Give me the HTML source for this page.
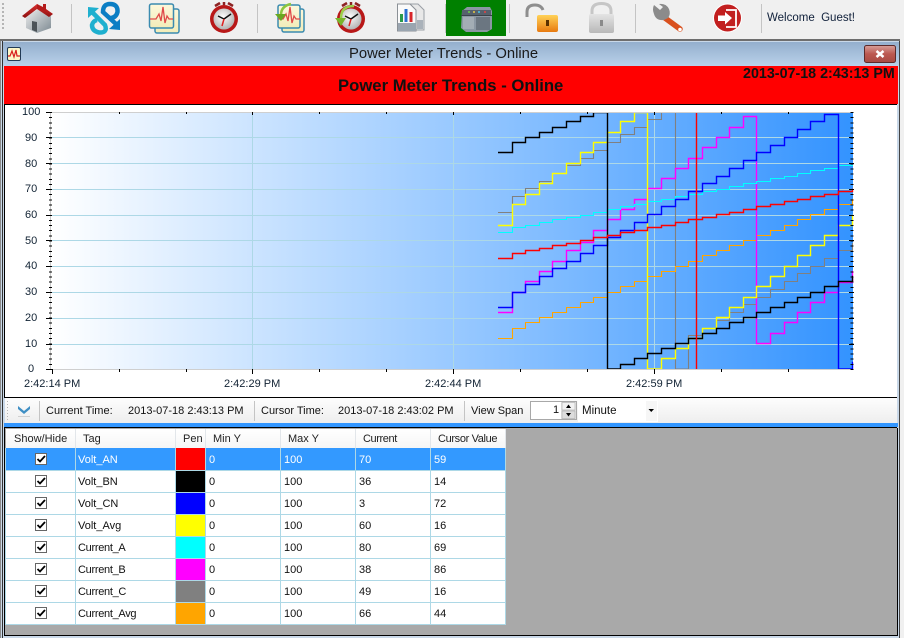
<!DOCTYPE html>
<html><head><meta charset="utf-8">
<style>
html,body{margin:0;padding:0;width:904px;height:638px;overflow:hidden;background:#f0f0f0;font-family:"Liberation Sans",sans-serif;color:#000}
div{position:absolute}
.t{white-space:pre;font-size:11px;line-height:14px;color:#111}
.h{position:absolute;top:429px;height:19px;background:linear-gradient(#fff,#f6f6f6);border-right:1px solid #e2e6ea;font-size:11px;line-height:20px;color:#222;white-space:pre;box-sizing:border-box}
.tl{font-size:11px;line-height:14px;color:#111;white-space:pre}
</style></head><body>

<!-- Top toolbar -->
<div style="left:446px;top:0;width:60px;height:36px;background:#008000"></div>
<svg style="position:absolute;left:0;top:0" width="904" height="40" viewBox="0 0 904 40">
<defs>
<linearGradient id="wall" x1="0" y1="0" x2="1" y2="1"><stop offset="0" stop-color="#eeeeee"/><stop offset="1" stop-color="#7d8a92"/></linearGradient>
<linearGradient id="roof" x1="0" y1="0" x2="0" y2="1"><stop offset="0" stop-color="#d83030"/><stop offset="1" stop-color="#8c0f0f"/></linearGradient>
<radialGradient id="face" cx=".45" cy=".4" r=".7"><stop offset="0" stop-color="#fff"/><stop offset="1" stop-color="#a8a8a8"/></radialGradient>
<linearGradient id="lockO" x1="0" y1="0" x2="0" y2="1"><stop offset="0" stop-color="#ffd257"/><stop offset="1" stop-color="#e87a10"/></linearGradient>
<linearGradient id="lockG" x1="0" y1="0" x2="0" y2="1"><stop offset="0" stop-color="#e4e4e4"/><stop offset="1" stop-color="#b8b8b8"/></linearGradient>
<linearGradient id="doc" x1="0" y1="0" x2="0" y2="1"><stop offset="0" stop-color="#fdf8dc"/><stop offset="1" stop-color="#f2ecb8"/></linearGradient>
</defs>
<!-- separators -->
<g fill="#c4c4c4"><rect x="71" y="4" width="1" height="29"/><rect x="257" y="4" width="1" height="29"/><rect x="445" y="4" width="1" height="29"/><rect x="509" y="4" width="1" height="29"/><rect x="635" y="4" width="1" height="29"/><rect x="761" y="4" width="1" height="29"/></g>
<path d="M3 3V30" stroke="#b5b5b5" stroke-width="2" stroke-dasharray="2 2"/>
<!-- house -->
<path d="M26 16L39 9L51 16V28L37 33L26 28Z" fill="url(#wall)"/>
<path d="M32 21L37 22V32L32 30Z" fill="#4c5358"/>
<path d="M22 16L37 4L53 14L49 17L37 9L25 18Z" fill="url(#roof)"/>
<path d="M37 4L43 7V4L46 4V9L53 14L37 9Z" fill="#b51c1c"/>
<!-- S logo -->
<path d="M92 12L105 25Q108 33 99 32.500 92 31 92 25 93 21 97 20" fill="none" stroke="#1fb0cf" stroke-width="4.500"/>
<path d="M88 7L88 18L99 8Z" fill="#1fb0cf"/>
<path d="M116 24L103 12Q103 4 110 4 118 4 117.500 12 116 18 110 18" fill="none" stroke="#0b7ec4" stroke-width="4.500"/>
<path d="M120 30L120 19L109 29Z" fill="#0b7ec4"/>
<!-- trend docs -->
<rect x="155" y="9" width="24" height="24" rx="2" fill="url(#doc)" stroke="#3b8bb0" stroke-width="1.500"/>
<rect x="149.500" y="4" width="24" height="24" rx="2" fill="url(#doc)" stroke="#3b8bb0" stroke-width="1.500"/>
<path d="M150 19H156L159 14L161 21L163 7L165 23L167 16L169 19H173" fill="none" stroke="#df4a4a" stroke-width="1.300"/>
<!-- clock -->
<circle cx="224" cy="19" r="14" fill="#b81818"/><circle cx="224" cy="19" r="10.500" fill="url(#face)"/>
<path d="M215 6l5-3M233 6l-5-3M224 2v3" stroke="#8d2323" stroke-width="2.500"/>
<path d="M224 19l-6-3M224 19l7-5" stroke="#111" stroke-width="1.500" fill="none"/><path d="M224 19l-2 7" stroke="#d22" stroke-width="1.500"/>
<!-- green docs -->
<rect x="282" y="9" width="22" height="23" rx="2" fill="url(#doc)" stroke="#3b8bb0" stroke-width="1.500"/>
<rect x="278" y="5" width="22" height="23" rx="2" fill="url(#doc)" stroke="#3b8bb0" stroke-width="1.500"/>
<path d="M278 19H283L286 14L288 21L290 7L292 23L294 16L296 19H300" fill="none" stroke="#df4a4a" stroke-width="1.300"/>
<path d="M291 4Q281 6 281 15" fill="none" stroke="#8cc63f" stroke-width="2.500"/><path d="M275 14H286L281 21Z" fill="#6aa820"/>
<!-- green clock -->
<circle cx="351" cy="19" r="14" fill="#b81818"/><circle cx="351" cy="19" r="10.500" fill="url(#face)"/>
<path d="M342 6l5-3M360 6l-5-3M351 2v3" stroke="#8d2323" stroke-width="2.500"/>
<path d="M351 19l-6-3M351 19l7-5" stroke="#111" stroke-width="1.500" fill="none"/><path d="M351 19l-2 7" stroke="#d22" stroke-width="1.500"/>
<path d="M354 6Q341 6 341 18" fill="none" stroke="#9ccf4a" stroke-width="2.500"/><path d="M335 18H346L341 26Z" fill="#78b52a"/>
<!-- report -->
<path d="M407 4H418L424 10V30H407Z" fill="#e8e8e8" stroke="#9a9fa6"/>
<path d="M397.500 4H410L416 10V31H397.500Z" fill="#fafafa" stroke="#8b9096"/>
<rect x="398" y="23" width="18" height="8" fill="#9aa5b0"/><rect x="417" y="20" width="6" height="9" fill="#aab2ba"/>
<rect x="400" y="14" width="3" height="8" fill="#2a9a4a"/><rect x="404.500" y="9" width="3" height="13" fill="#2a6fd0"/><rect x="409.500" y="12" width="3" height="10" fill="#d8262a"/>
<!-- PLC -->
<path d="M462 11L467 7H490L492 11V29L487 32H466L461 28Z" fill="#8b97a3"/>
<rect x="462" y="10" width="29" height="5" fill="#56616d"/><rect x="461" y="15" width="31" height="1" fill="#3a424a"/>
<rect x="463" y="17" width="11" height="12" fill="#a3adb5"/><rect x="476" y="17" width="14" height="13" fill="#6b7681"/>
<circle cx="469" cy="12" r="1" fill="#6cd04a"/><circle cx="474" cy="12" r="1" fill="#e8c840"/><circle cx="479" cy="12" r="1" fill="#48c8e8"/><circle cx="485" cy="12" r="1" fill="#e84040"/>
<!-- unlock -->
<path d="M527 17V12Q527 5 535 5Q541 5 543 10" fill="none" stroke="#8e8e8e" stroke-width="3"/>
<rect x="537" y="15" width="21" height="17" rx="2" fill="url(#lockO)"/><rect x="546" y="20" width="3" height="6" fill="#5a3000"/>
<!-- lock -->
<path d="M592 16V11Q592 3.500 601.500 3.500Q611 3.500 611 11V16" fill="none" stroke="#c6c6c6" stroke-width="3"/>
<rect x="589" y="14" width="25" height="19" rx="2" fill="url(#lockG)"/><rect x="600" y="20" width="3" height="6" fill="#8a8a8a"/>
<!-- wrench -->
<path d="M665 18L680 29" stroke="#d9501e" stroke-width="5.500" stroke-linecap="round"/><circle cx="680" cy="29.500" r="1.800" fill="#fff"/>
<path d="M654 5L660 10L663 7L659 4Q666 3 669 9Q671 14 668 18L664 20Q656 21 654 14Q652 9 654 5Z" fill="#8b8b8b"/>
<!-- exit -->
<circle cx="727.500" cy="18" r="14.500" fill="#fff"/><circle cx="727.500" cy="18" r="13.500" fill="#c21f1f"/>
<path d="M726 10H736V27H726" fill="none" stroke="#fff" stroke-width="1.800"/>
<path d="M718 15.500H725V12L732 18L725 24.500V21H718Z" fill="#fff"/>
</svg>
<div class="t" style="left:767px;top:11px;font-size:11.500px;color:#10203a">Welcome  Guest!</div>

<!-- window frame -->
<div style="left:0;top:39px;width:900px;height:2px;background:#6e6e6e"></div>
<div style="left:0;top:41px;width:900px;height:597px;background:#c9d8e8"></div>
<div style="left:0;top:41px;width:1px;height:597px;background:#8a8a8a"></div>
<div style="left:2px;top:41px;width:1px;height:597px;background:#333"></div>
<div style="left:899px;top:41px;width:1px;height:597px;background:#444"></div>
<div style="left:3px;top:42px;width:896px;height:24px;background:linear-gradient(#94afcd,#b9d1ea)"></div>
<div style="left:349px;top:46px;font-size:14.800px;line-height:17px;color:#1a1a1a;white-space:pre">Power Meter Trends - Online</div>
<svg style="position:absolute;left:7px;top:47px" width="14" height="14" viewBox="0 0 14 14"><rect x=".5" y=".5" width="13" height="13" rx="1.500" fill="#fdf7c8" stroke="#223a55"/><path d="M1 9H3L5 4L7 10L9 3L10 9H13" fill="none" stroke="#d81e1e" stroke-width="1.200"/></svg>
<svg style="position:absolute;left:864px;top:45px" width="32" height="18" viewBox="0 0 32 18"><defs><linearGradient id="cl" x1="0" y1="0" x2="0" y2="1"><stop offset="0" stop-color="#d8a09a"/><stop offset=".5" stop-color="#bb5850"/><stop offset="1" stop-color="#a84a42"/></linearGradient></defs><rect x=".5" y=".5" width="31" height="17" rx="2" fill="url(#cl)" stroke="#5c2a2a"/><path d="M12.500 6L19.500 12M19.500 6L12.500 12" stroke="#fff" stroke-width="2.500"/></svg>

<!-- red header -->
<div style="left:4px;top:66px;width:894px;height:38px;background:#f00"></div>
<div style="left:338px;top:76px;font-size:16.700px;font-weight:bold;line-height:19px;color:#111;white-space:pre">Power Meter Trends - Online</div>
<div style="left:743px;top:66px;font-size:14.300px;font-weight:bold;line-height:16px;color:#111;white-space:pre">2013-07-18 2:43:13 PM</div>

<!-- chart -->
<div style="left:4px;top:104px;background:#fff;border-top:1px solid #000;border-left:1px solid #000;width:892px;height:292px"></div>
<div style="left:52px;top:112px;width:801px;height:257px;background:linear-gradient(90deg,#fff,#3393ff)"></div>
<svg style="position:absolute;left:0;top:0" width="904" height="400" viewBox="0 0 904 400" shape-rendering="crispEdges">
<g stroke="#add8e6" fill="none">
<path d="M52 137.500H853M52 163.500H853M52 189.500H853M52 215.500H853M52 240.500H853M52 266.500H853M52 292.500H853M52 318.500H853M52 344.500H853"/>
<path d="M252.500 112V369M453.500 112V369M654.500 112V369"/>
</g>
<path d="M50.500 112V369" stroke="#c8c8c8" fill="none"/>
<g fill="none" stroke-width="1.100" shape-rendering="geometricPrecision">
<path stroke="#808080" d="M498 212.500H512.500V196.500H525.500V188.500H539.500V181.500H552.500V173.500H566.500V165.500H580.500V158.500H593.500V150.500H607.500V142.500H620.500V134.500H634.500V127.500H647.500V119.500H661.500V112.500H675.500V369H688.500V335.500H702.500V328.500H716.500V320.500H729.500V312.500H743.500V304.500H756.500V297.500H770.500V289.500H784.500V281.500H797.500V273.500H810.500V266.500H824.500V258.500H838.500V250.500H852.500V243.500H853"/>
<path stroke="#ffa500" d="M498 338.500H512.500V328.500H525.500V322.500H539.500V317.500H552.500V312.500H566.500V307.500H580.500V302.500H593.500V297.500H607.500V292.500H620.500V286.500H634.500V281.500H647.500V276.500H661.500V271.500H675.500V266.500H688.500V261.500H702.500V255.500H716.500V250.500H729.500V245.500H743.500V240.500H756.500V235.500H770.500V230.500H784.500V225.500H797.500V219.500H810.500V214.500H824.500V209.500H838.500V204.500H852.500V199.500H853"/>
<path stroke="#ff00ff" stroke-width="1.400" d="M498 312.500H512.500V292.500H525.500V281.500H539.500V271.500H552.500V261.500H566.500V250.500H580.500V242.500H593.500V230.500H607.500V219.500H620.500V209.500H634.500V199.500H647.500V188.500H661.500V178.500H675.500V168.500H688.500V158.500H702.500V147.500H716.500V137.500H729.500V127.500H743.500V116.500H756.500V343.500H770.500V333.500H784.500V322.500H797.500V312.500H810.500V302.500H824.500V292.500H838.500V282.500H852.500V271.500H853"/>
<path stroke="#00ffff" d="M498 232.500H512.500V227.500H525.500V225.500H539.500V222.500H552.500V219.500H566.500V217.500H580.500V215.500H593.500V212.500H607.500V209.500H620.500V206.500H634.500V204.500H647.500V201.500H661.500V199.500H675.500V196.500H688.500V194.500H702.500V191.500H716.500V189.500H729.500V186.500H743.500V183.500H756.500V181.500H770.500V178.500H784.500V176.500H797.500V173.500H810.500V170.500H824.500V168.500H838.500V165.500H853"/>
<path stroke="#ffff00" stroke-width="1.400" d="M498 225.500H512.500V204.500H525.500V194.500H539.500V183.500H552.500V173.500H566.500V163.500H580.500V152.500H593.500V142.500H607.500V132.500H620.500V121.500H634.500V112.500H647.500V369H661.500V358.500H675.500V348.500H688.500V338.500H702.500V328.500H716.500V317.500H729.500V307.500H743.500V297.500H756.500V286.500H770.500V276.500H784.500V266.500H797.500V255.500H810.500V245.500H824.500V235.500H838.500V225.500H852.500V215.500H853"/>
<path stroke="#0000ff" stroke-width="1.400" d="M498 307.500H512.500V292.500H525.500V284.500H539.500V276.500H552.500V268.500H566.500V261.500H580.500V253.500H593.500V245.500H607.500V237.500H620.500V230.500H634.500V222.500H647.500V214.500H661.500V206.500H675.500V199.500H688.500V191.500H702.500V183.500H716.500V176.500H729.500V168.500H743.500V160.500H756.500V152.500H770.500V145.500H784.500V137.500H797.500V129.500H810.500V121.500H824.500V114.500H838.500V369H852.500V362.500H853"/>
<path stroke="#000000" stroke-width="1.400" d="M498 152.500H512.500V142.500H525.500V137.500H539.500V132.500H552.500V127.500H566.500V121.500H580.500V116.500H593.500V112.500H607.500V369H620.500V364.500H634.500V358.500H647.500V353.500H661.500V348.500H675.500V343.500H688.500V338.500H702.500V333.500H716.500V328.500H729.500V322.500H743.500V317.500H756.500V312.500H770.500V307.500H784.500V302.500H797.500V297.500H810.500V292.500H824.500V286.500H838.500V281.500H852.500V276.500H853"/>
<path stroke="#ff0000" stroke-width="1.400" d="M498 258.500H512.500V253.500H525.500V250.500H539.500V248.500H552.500V245.500H566.500V243.500H580.500V240.500H593.500V237.500H607.500V235.500H620.500V232.500H634.500V230.500H647.500V227.500H661.500V225.500H675.500V222.500H688.500V219.500H702.500V217.500H716.500V214.500H729.500V212.500H743.500V209.500H756.500V206.500H770.500V204.500H784.500V201.500H797.500V199.500H810.500V196.500H824.500V194.500H838.500V191.500H852.500V189.500H853"/>
<path stroke="#ff0000" stroke-width="1.400" d="M696.500 112V369"/>
</g>
<rect x="52" y="105" width="802" height="7" fill="#fff"/>
<rect x="52" y="370" width="802" height="4" fill="#fff"/>
<path d="M52 112.500H853M52 369.500H853" stroke="#cfcfcf" fill="none"/>
<g fill="none" stroke="#000">
<path d="M50.500 112V370" stroke-width="3" stroke-dasharray="1 4.140"/>
<path d="M46 112.500H52M46 137.500H52M46 163.500H52M46 189.500H52M46 215.500H52M46 240.500H52M46 266.500H52M46 292.500H52M46 318.500H52M46 344.500H52M46 369.500H52"/>
<path d="M852 112V370" stroke-width="3" stroke-dasharray="1 4.140"/>
<path d="M849 137.500H854M849 163.500H854M849 189.500H854M849 215.500H854M849 240.500H854M849 266.500H854M849 292.500H854M849 318.500H854M849 344.500H854"/>
<path d="M52.500 369V374M252.500 369V374M453.500 369V374M654.500 369V374M119.500 369V372M186.500 369V372M319.500 369V372M386.500 369V372M520.500 369V372M587.500 369V372M721.500 369V372M788.500 369V372"/>
<path d="M119.500 112V114M186.500 112V114M252.500 112V115M319.500 112V114M386.500 112V114M453.500 112V115M520.500 112V114M587.500 112V114M654.500 112V115M721.500 112V114M788.500 112V114"/>
</g>
</svg>
<div class="t" style="left:22px;top:105px;color:#123">100</div>
<div class="t" style="left:25px;top:131px;color:#123">90</div>
<div class="t" style="left:25px;top:157px;color:#123">80</div>
<div class="t" style="left:25px;top:182px;color:#123">70</div>
<div class="t" style="left:25px;top:208px;color:#123">60</div>
<div class="t" style="left:25px;top:234px;color:#123">50</div>
<div class="t" style="left:25px;top:259px;color:#123">40</div>
<div class="t" style="left:25px;top:285px;color:#123">30</div>
<div class="t" style="left:25px;top:311px;color:#123">20</div>
<div class="t" style="left:25px;top:337px;color:#123">10</div>
<div class="t" style="left:28px;top:362px;color:#123">0</div>
<div class="t" style="left:24px;top:377px;color:#123">2:42:14 PM</div>
<div class="t" style="left:224px;top:377px;color:#123">2:42:29 PM</div>
<div class="t" style="left:425px;top:377px;color:#123">2:42:44 PM</div>
<div class="t" style="left:626px;top:377px;color:#123">2:42:59 PM</div>

<!-- control bar -->
<div style="left:4px;top:397px;width:893px;height:1px;background:#000"></div>
<div style="left:5px;top:398px;width:892px;height:25px;background:linear-gradient(#fdfdfd,#eeeeee)"></div>
<div style="left:4px;top:423px;width:894px;height:4px;background:#3296ff"></div>
<div style="left:4px;top:427px;width:893px;height:1px;background:#000"></div>
<svg style="position:absolute;left:0;top:398px" width="680" height="26" viewBox="0 0 680 26">
<path d="M7.500 3V22" stroke="#b5b5b5" stroke-dasharray="1 2"/>
<path d="M18 8L24 13L30 8V11L24 16L18 11Z" fill="#3f8fc4"/><rect x="18" y="18" width="12" height="1" fill="#d0d0d0"/>
<rect x="39" y="3" width="1" height="20" fill="#c4c4c4"/><rect x="254" y="3" width="1" height="20" fill="#c4c4c4"/><rect x="464" y="3" width="1" height="20" fill="#c4c4c4"/>
<rect x="578" y="2" width="80" height="22" fill="#fff"/><rect x="646" y="3" width="11" height="20" fill="#f6f6f6"/>
<path d="M648.500 11H654L651.250 14Z" fill="#000"/>
<rect x="530.500" y="3.500" width="46" height="18" fill="#fff" stroke="#a8a8a8"/>
<rect x="561" y="4" width="15" height="17" fill="#e8e8e8"/><rect x="562" y="4.500" width="13" height="7.500" fill="#f2f2f2" stroke="#aaa" stroke-width=".6"/><rect x="562" y="13" width="13" height="7.500" fill="#ddd" stroke="#aaa" stroke-width=".6"/>
<path d="M566 10H571L568.500 6.500Z" fill="#000"/><path d="M566 15H571L568.500 18.500Z" fill="#000"/>
</svg>
<div class="tl" style="left:46px;top:404px">Current Time:</div>
<div class="tl" style="left:128px;top:404px">2013-07-18 2:43:13 PM</div>
<div class="tl" style="left:261px;top:404px">Cursor Time:</div>
<div class="tl" style="left:338px;top:404px">2013-07-18 2:43:02 PM</div>
<div class="tl" style="left:471px;top:404px">View Span</div>
<div class="tl" style="left:553px;top:403px">1</div>
<div class="tl" style="left:582px;top:404px;font-size:11.500px">Minute</div>

<!-- gray panel -->
<div style="left:5px;top:428px;width:892px;height:207px;background:#a9a9a9"></div>
<div style="left:4px;top:428px;width:1px;height:208px;background:#000"></div>
<div style="left:897px;top:428px;width:1px;height:208px;background:#000"></div>
<div style="left:4px;top:635px;width:894px;height:1px;background:#000"></div>

<!-- table -->
<div style="left:6px;top:429px;width:499px;height:196px;background:#fff"></div>
<div class="h" style="left:6px;width:70px;padding-left:8px">Show/Hide</div>
<div class="h" style="left:76px;width:100px;padding-left:7px">Tag</div>
<div class="h" style="left:176px;width:30px;padding-left:7px">Pen</div>
<div class="h" style="left:206px;width:75px;padding-left:7px">Min Y</div>
<div class="h" style="left:281px;width:75px;padding-left:7px">Max Y</div>
<div class="h" style="left:356px;width:75px;padding-left:7px;letter-spacing:-.4px">Current</div>
<div class="h" style="left:431px;width:75px;padding-left:7px;letter-spacing:-.35px">Cursor Value</div>
<div style="left:6px;top:448px;width:499px;height:22px;background:#3399ff"></div>
<div style="left:176px;top:448px;width:29px;height:22px;background:#f00"></div>
<div style="left:176px;top:471px;width:29px;height:21px;background:#000"></div>
<div style="left:176px;top:493px;width:29px;height:21px;background:#00f"></div>
<div style="left:176px;top:515px;width:29px;height:21px;background:#ff0"></div>
<div style="left:176px;top:537px;width:29px;height:21px;background:#0ff"></div>
<div style="left:176px;top:559px;width:29px;height:21px;background:#f0f"></div>
<div style="left:176px;top:581px;width:29px;height:21px;background:#808080"></div>
<div style="left:176px;top:603px;width:29px;height:21px;background:#ffa500"></div>
<svg style="position:absolute;left:0;top:440px" width="520" height="190" viewBox="0 0 520 190" shape-rendering="crispEdges">
<g stroke="#add8e6" fill="none">
<path d="M6 30.500H506M6 52.500H506M6 74.500H506M6 96.500H506M6 118.500H506M6 140.500H506M6 162.500H506M6 184.500H506"/>
<path d="M5.500 8V185M75.500 8V185M175.500 8V185M205.500 8V185M280.500 8V185M355.500 8V185M430.500 8V185M505.500 8V185"/>
</g>
</svg>
<svg style="position:absolute;left:0;top:440px" width="60" height="190" viewBox="0 0 60 190">
<g fill="#fff" stroke="#666">
<rect x="35.500" y="13.500" width="11" height="11"/><rect x="35.500" y="35.500" width="11" height="11"/><rect x="35.500" y="57.500" width="11" height="11"/><rect x="35.500" y="79.500" width="11" height="11"/><rect x="35.500" y="101.500" width="11" height="11"/><rect x="35.500" y="123.500" width="11" height="11"/><rect x="35.500" y="145.500" width="11" height="11"/><rect x="35.500" y="167.500" width="11" height="11"/>
</g>
<g fill="none" stroke="#000" stroke-width="1.800">
<path d="M37.500 19L40 21.500L45 16M37.500 41L40 43.500L45 38M37.500 63L40 65.500L45 60M37.500 85L40 87.500L45 82M37.500 107L40 109.500L45 104M37.500 129L40 131.500L45 126M37.500 151L40 153.500L45 148M37.500 173L40 175.500L45 170"/>
</g>
</svg>
<div class="t" style="left:78px;top:453px;color:#fff">Volt_AN</div><div class="t" style="left:209px;top:453px;color:#fff">0</div><div class="t" style="left:284px;top:453px;color:#fff">100</div><div class="t" style="left:359px;top:453px;color:#fff">70</div><div class="t" style="left:434px;top:453px;color:#fff">59</div>
<div class="t" style="left:78px;top:475px">Volt_BN</div><div class="t" style="left:209px;top:475px">0</div><div class="t" style="left:284px;top:475px">100</div><div class="t" style="left:359px;top:475px">36</div><div class="t" style="left:434px;top:475px">14</div>
<div class="t" style="left:78px;top:497px">Volt_CN</div><div class="t" style="left:209px;top:497px">0</div><div class="t" style="left:284px;top:497px">100</div><div class="t" style="left:359px;top:497px">3</div><div class="t" style="left:434px;top:497px">72</div>
<div class="t" style="left:78px;top:519px">Volt_Avg</div><div class="t" style="left:209px;top:519px">0</div><div class="t" style="left:284px;top:519px">100</div><div class="t" style="left:359px;top:519px">60</div><div class="t" style="left:434px;top:519px">16</div>
<div class="t" style="left:78px;top:541px;letter-spacing:-.3px">Current_A</div><div class="t" style="left:209px;top:541px">0</div><div class="t" style="left:284px;top:541px">100</div><div class="t" style="left:359px;top:541px">80</div><div class="t" style="left:434px;top:541px">69</div>
<div class="t" style="left:78px;top:563px;letter-spacing:-.3px">Current_B</div><div class="t" style="left:209px;top:563px">0</div><div class="t" style="left:284px;top:563px">100</div><div class="t" style="left:359px;top:563px">38</div><div class="t" style="left:434px;top:563px">86</div>
<div class="t" style="left:78px;top:585px;letter-spacing:-.3px">Current_C</div><div class="t" style="left:209px;top:585px">0</div><div class="t" style="left:284px;top:585px">100</div><div class="t" style="left:359px;top:585px">49</div><div class="t" style="left:434px;top:585px">16</div>
<div class="t" style="left:78px;top:607px;letter-spacing:-.3px">Current_Avg</div><div class="t" style="left:209px;top:607px">0</div><div class="t" style="left:284px;top:607px">100</div><div class="t" style="left:359px;top:607px">66</div><div class="t" style="left:434px;top:607px">44</div>
</body></html>
